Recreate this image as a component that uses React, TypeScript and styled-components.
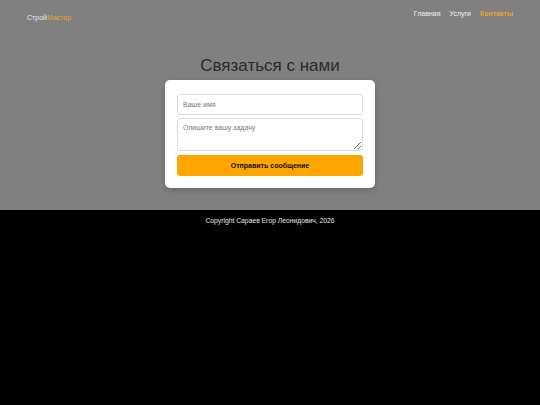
import React from "react";
import styled, { createGlobalStyle } from "styled-components";

const Global = createGlobalStyle`
  html, body { margin: 0; padding: 0; height: 100%; }
  body { background: #808080; font-family: "Liberation Sans", Arial, sans-serif; }
  #root { min-height: 100%; display: flex; flex-direction: column; }
  * { box-sizing: border-box; }
`;

const Page = styled.div`
  min-height: 100vh;
  display: flex;
  flex-direction: column;
`;

const Header = styled.header`
  display: flex;
  justify-content: space-between;
  align-items: flex-start;
  padding: 9px 27px 0 27px;
  height: 48px;
`;

const Logo = styled.div`
  font-size: 7px;
  color: #e6e6e6;
  margin-top: 5px;
`;

const Accent = styled.span`
  color: #f2a22e;
`;

const Nav = styled.nav`
  display: flex;
  gap: 9px;
  font-size: 7px;
  margin-top: 1px;
`;

const NavLink = styled.a<{ $active?: boolean }>`
  color: ${(p) => (p.$active ? "#f2a22e" : "#f0f0f0")};
  font-weight: ${(p) => (p.$active ? 700 : 400)};
  text-decoration: none;
`;

const Main = styled.main`
  display: flex;
  flex-direction: column;
  align-items: center;
  padding-bottom: 22px;
`;

const Title = styled.h1`
  margin: 7px 0 0 0;
  font-size: 17px;
  font-weight: 400;
  color: #2b2b2b;
  line-height: 22px;
`;

const Card = styled.form`
  margin-top: 3px;
  width: 210px;
  background: #fff;
  border-radius: 5px;
  padding: 14px 12px 12px 12px;
  display: flex;
  flex-direction: column;
  gap: 3px;
  box-shadow: 0 2px 6px rgba(0, 0, 0, 0.2);
`;

const Input = styled.input`
  height: 21px;
  border: 1px solid #dcdcdc;
  border-radius: 3px;
  padding: 0 5px;
  font-family: "Liberation Sans", Arial, sans-serif;
  font-size: 7px;
  outline: none;
  &::placeholder { color: #777; }
`;

const TextArea = styled.textarea`
  height: 33px;
  border: 1px solid #dcdcdc;
  border-radius: 3px;
  padding: 5px 5px;
  font-family: "Liberation Sans", Arial, sans-serif;
  font-size: 7px;
  resize: vertical;
  outline: none;
  &::placeholder { color: #777; }
`;

const Button = styled.button`
  margin-top: 1px;
  height: 21px;
  border: none;
  border-radius: 3px;
  background: #ffa500;
  color: #111;
  font-family: "Liberation Sans", Arial, sans-serif;
  font-weight: 700;
  font-size: 7px;
  cursor: pointer;
`;

const Footer = styled.footer`
  flex: 1;
  background: #000;
  color: #e6e6e6;
  text-align: center;
  font-size: 6.75px;
  padding-top: 7px;
`;

export default function App() {
  return (
    <Page>
      <Global />
      <Header>
        <Logo>
          Строй<Accent>Мастер</Accent>
        </Logo>
        <Nav>
          <NavLink href="#">Главная</NavLink>
          <NavLink href="#">Услуги</NavLink>
          <NavLink href="#" $active>
            Контакты
          </NavLink>
        </Nav>
      </Header>
      <Main>
        <Title>Связаться с нами</Title>
        <Card onSubmit={(e) => e.preventDefault()}>
          <Input placeholder="Ваше имя" />
          <TextArea placeholder="Опишите вашу задачу" />
          <Button type="submit">Отправить сообщение</Button>
        </Card>
      </Main>
      <Footer>Copyright Сараев Егор Леонидович, 2026</Footer>
    </Page>
  );
}
